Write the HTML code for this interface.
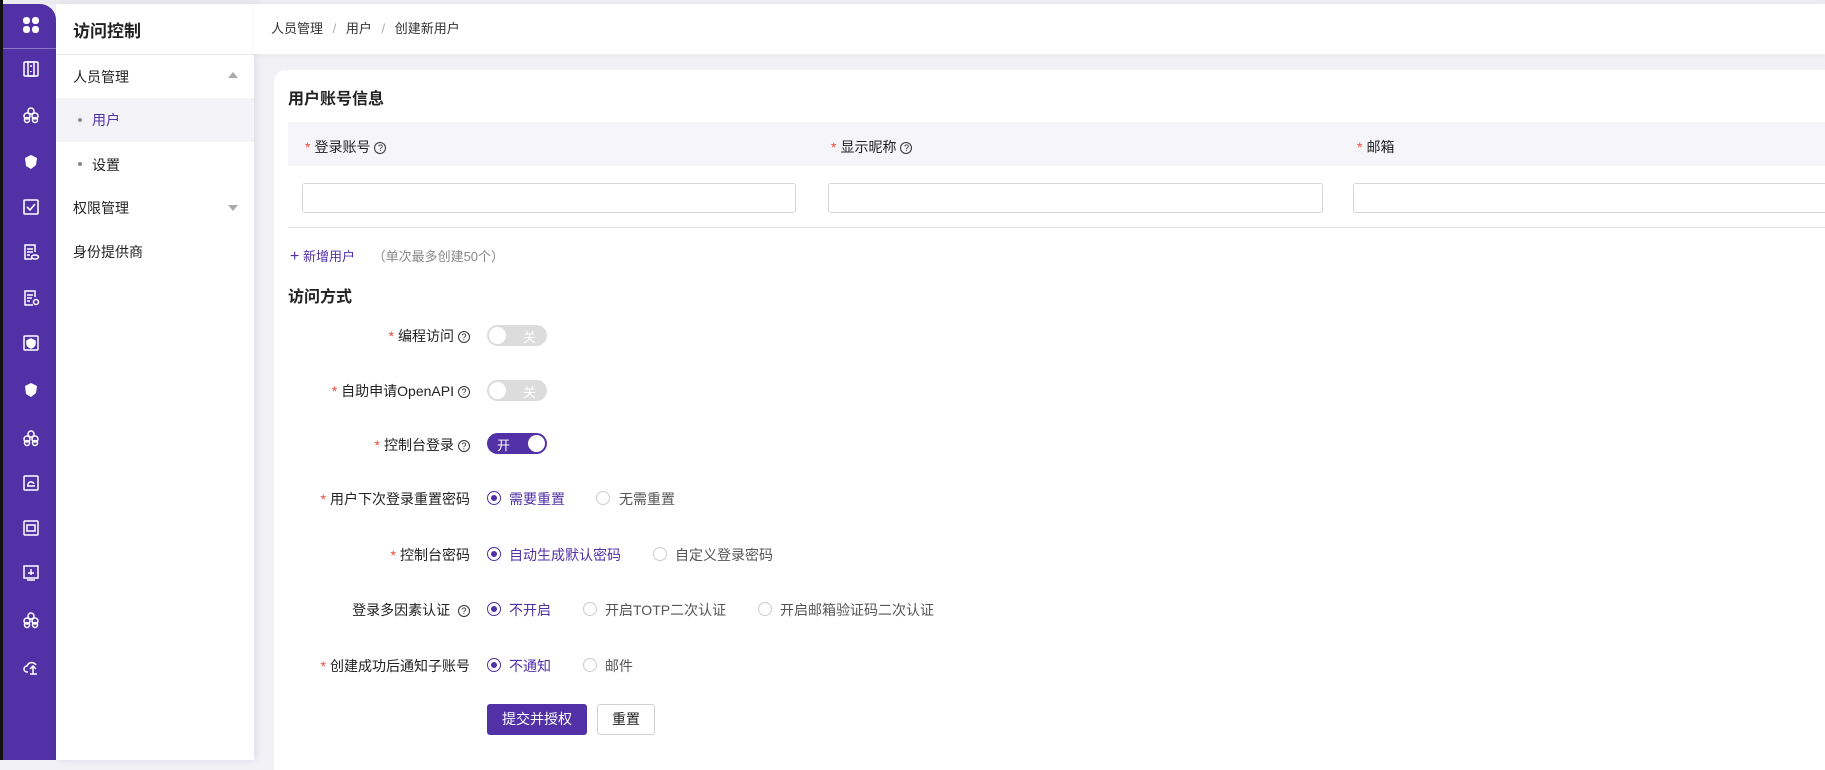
<!DOCTYPE html>
<html><head><meta charset="utf-8">
<style>
*{box-sizing:border-box;margin:0;padding:0}
body{width:1825px;height:760px;overflow:hidden;background:#f2f2f6;font-family:"Liberation Sans","Noto Sans CJK SC",sans-serif;color:#222;position:relative;font-size:14px}
.abs{position:absolute}
#strip{left:0;top:0;width:1825px;height:4px;background:#ececf0}
#black{left:0;top:0;width:3px;height:760px;background:#111}
#side{left:3px;top:4px;width:53px;height:756px;background:#5230a5;border-top-right-radius:16px}
#side .div{position:absolute;left:0;top:44px;width:53px;height:1px;background:#8a74c4}
.ic{position:absolute;left:19px;width:18px;height:18px}
#menu{left:56px;top:4px;width:198px;height:756px;background:#fff;box-shadow:2px 0 8px rgba(80,60,140,.12)}
#menu .t{position:absolute;left:17px;top:13px;font-size:17px;font-weight:bold}
#menu .hl{position:absolute;left:0;top:50px;width:198px;height:1px;background:#e6e6ec}
.mi{position:absolute;left:17px;font-size:14px}
.dot{position:absolute;left:22px;width:4px;height:4px;border-radius:2px;background:#888}
#hdr{left:254px;top:4px;width:1571px;height:50px;background:#fff;box-shadow:0 2px 6px rgba(0,0,0,.04)}
#card{left:274px;top:70px;width:1560px;height:700px;background:#fff;border-top-left-radius:12px}
.h{position:absolute;font-size:16px;font-weight:bold}
.req{color:#f04a3a;margin-right:4px}
.q{display:inline-block;width:12px;height:12px;border:1px solid #333;border-radius:50%;font-size:9px;line-height:10px;text-align:center;vertical-align:1px;margin-left:4px}
.inp{position:absolute;top:183px;height:30px;border:1px solid #d6d6da;border-radius:3px;background:#fff}
.lbl{position:absolute;right:1355px;font-size:14px;white-space:nowrap;text-align:right}
.tg{position:absolute;left:487px;width:60px;height:21px;border-radius:11px;background:#dcdcdc;color:#fff;font-size:13px}
.tg .k{position:absolute;top:2px;width:17px;height:17px;border-radius:50%;background:#fff}
.rd{position:absolute;width:14px;height:14px;border:1px solid #ccc;border-radius:50%}
.rd.on{border-color:#5230a5}
.rd.on:after{content:"";position:absolute;left:3px;top:3px;width:6px;height:6px;border-radius:50%;background:#5230a5}
.rt{position:absolute;font-size:14px;color:#555}
.rt.on{color:#5230a5}
</style></head><body>
<div id="strip" class="abs"></div>
<div id="black" class="abs"></div>
<div id="side" class="abs">
 <svg class="ic" style="top:12px" viewBox="0 0 18 18" fill="#fff"><rect x="1" y="1" width="7" height="7" rx="3"/><rect x="10" y="1" width="7" height="7" rx="3"/><rect x="1" y="10" width="7" height="7" rx="3"/><rect x="10" y="10" width="7" height="7" rx="3"/></svg>
 <div class="div"></div>
 <svg class="ic" style="top:56px" viewBox="0 0 18 18" fill="none" stroke="#fff" stroke-width="1.5"><rect x="2" y="2" width="14" height="14" rx="1"/><rect x="6" y="2" width="6" height="14"/><path d="M8 6h2M9 11v1"/></svg>
 <svg class="ic" style="top:102px" viewBox="0 0 18 18" fill="none" stroke="#fff" stroke-width="1.5"><circle cx="9" cy="5" r="3"/><circle cx="5" cy="10" r="3"/><circle cx="13" cy="10" r="3"/><circle cx="5" cy="14" r="2.5"/><circle cx="13" cy="14" r="2.5"/></svg>
 <svg class="ic" style="top:149px" viewBox="0 0 18 18" fill="#fff"><path d="M3 5l6-3 6 3-1 7-5 4-5-3z"/></svg>
 <svg class="ic" style="top:194px" viewBox="0 0 18 18" fill="none" stroke="#fff" stroke-width="1.6"><rect x="2" y="2" width="14" height="14" rx="1"/><path d="M5 9l3 3 5-6"/></svg>
 <svg class="ic" style="top:239px" viewBox="0 0 18 18" fill="none" stroke="#fff" stroke-width="1.5"><path d="M13 9V2H3v14h7"/><path d="M5 6h6M5 9h6M5 12h3"/><ellipse cx="13" cy="14" rx="3.5" ry="2"/></svg>
 <svg class="ic" style="top:285px" viewBox="0 0 18 18" fill="none" stroke="#fff" stroke-width="1.5"><path d="M13 8V2H3v14h8"/><path d="M5 6h6M5 9h5M5 12h3"/><circle cx="14" cy="13" r="2.5"/></svg>
 <svg class="ic" style="top:330px" viewBox="0 0 18 18" fill="none" stroke="#fff" stroke-width="1.5"><rect x="2" y="2" width="14" height="14" rx="1"/><path d="M9 5l4 2v3c0 2-2 3-4 4-2-1-4-2-4-4V7z" fill="#fff"/></svg>
 <svg class="ic" style="top:377px" viewBox="0 0 18 18" fill="#fff"><path d="M3 5l6-3 6 3-1 7-5 4-5-3z"/></svg>
 <svg class="ic" style="top:425px" viewBox="0 0 18 18" fill="none" stroke="#fff" stroke-width="1.5"><circle cx="9" cy="5" r="3"/><circle cx="5" cy="10" r="3"/><circle cx="13" cy="10" r="3"/><circle cx="5" cy="14" r="2.5"/><circle cx="13" cy="14" r="2.5"/></svg>
 <svg class="ic" style="top:470px" viewBox="0 0 18 18" fill="none" stroke="#fff" stroke-width="1.5"><rect x="2" y="2" width="14" height="14" rx="1"/><path d="M5 12h8M6 12a3 3 0 016-2"/></svg>
 <svg class="ic" style="top:515px" viewBox="0 0 18 18" fill="none" stroke="#fff" stroke-width="1.5"><rect x="2" y="2" width="14" height="14" rx="1"/><path d="M5 6h8v6H5z"/></svg>
 <svg class="ic" style="top:560px" viewBox="0 0 18 18" fill="none" stroke="#fff" stroke-width="1.5"><rect x="2" y="2" width="14" height="12"/><path d="M5 16h8M9 5v6M6 9h6"/></svg>
 <svg class="ic" style="top:607px" viewBox="0 0 18 18" fill="none" stroke="#fff" stroke-width="1.5"><circle cx="9" cy="5" r="3"/><circle cx="5" cy="10" r="3"/><circle cx="13" cy="10" r="3"/><circle cx="5" cy="14" r="2.5"/><circle cx="13" cy="14" r="2.5"/></svg>
 <svg class="ic" style="top:654px" viewBox="0 0 18 18" fill="none" stroke="#fff" stroke-width="1.5"><path d="M6 14H5a3 3 0 010-6 5 5 0 019-1"/><path d="M11 16V9M8 11l3-3 3 3M8 16h7"/></svg>
</div>
<div id="menu" class="abs">
 <div class="t">访问控制</div>
 <div class="hl"></div>
 <div class="mi" style="top:63px">人员管理</div>
 <div class="abs" style="left:172px;top:68px;width:0;height:0;border:5px solid transparent;border-bottom:6px solid #aaa;border-top:0"></div>
 <div class="abs" style="left:0;top:94px;width:198px;height:44px;background:#f3f3f8"></div>
 <div class="dot" style="top:114px"></div>
 <div class="mi" style="left:36px;top:106px;color:#5230a5">用户</div>
 <div class="dot" style="top:158px"></div>
 <div class="mi" style="left:36px;top:151px">设置</div>
 <div class="mi" style="top:194px">权限管理</div>
 <div class="abs" style="left:172px;top:201px;width:0;height:0;border:5px solid transparent;border-top:6px solid #aaa;border-bottom:0"></div>
 <div class="mi" style="top:238px">身份提供商</div>
</div>
<div id="hdr" class="abs"><div style="position:absolute;left:17px;top:14px;font-size:13px;color:#333">人员管理 <span style="color:#aaa;margin:0 6px">/</span> 用户 <span style="color:#aaa;margin:0 6px">/</span> 创建新用户</div></div>
<div id="card" class="abs"></div>
<div class="h" style="left:288px;top:85px">用户账号信息</div>
<div class="abs" style="left:288px;top:122px;width:1537px;height:44px;background:#f5f5fa"></div>
<div class="abs" style="left:305px;top:137px;font-size:14px"><span class="req">*</span>登录账号<span class="q">?</span></div>
<div class="abs" style="left:831px;top:137px;font-size:14px"><span class="req">*</span>显示昵称<span class="q">?</span></div>
<div class="abs" style="left:1357px;top:137px;font-size:14px"><span class="req">*</span>邮箱</div>
<div class="inp" style="left:302px;width:494px"></div>
<div class="inp" style="left:828px;width:495px"></div>
<div class="inp" style="left:1353px;width:500px"></div>
<div class="abs" style="left:288px;top:227px;width:1537px;height:1px;background:#e3e3e8"></div>
<div class="abs" style="left:290px;top:246px;font-size:13px;color:#5230a5"><span style="font-size:16px">+</span> 新增用户 <span style="color:#888;margin-left:14px">（单次最多创建50个）</span></div>
<div class="h" style="left:288px;top:283px">访问方式</div>

<div class="lbl" style="top:326px"><span class="req">*</span>编程访问<span class="q">?</span></div>
<div class="tg" style="top:325px"><div class="k" style="left:2px"></div><span style="position:absolute;left:36px;top:2px">关</span></div>
<div class="lbl" style="top:381px"><span class="req">*</span>自助申请OpenAPI<span class="q">?</span></div>
<div class="tg" style="top:380px"><div class="k" style="left:2px"></div><span style="position:absolute;left:36px;top:2px">关</span></div>
<div class="lbl" style="top:435px"><span class="req">*</span>控制台登录<span class="q">?</span></div>
<div class="tg" style="top:433px;background:#5230a5"><span style="position:absolute;left:10px;top:2px">开</span><div class="k" style="left:41px"></div></div>

<div class="lbl" style="top:489px;right:1355px"><span class="req">*</span>用户下次登录重置密码</div>
<div class="rd on" style="left:487px;top:491px"></div><div class="rt on" style="left:509px;top:489px">需要重置</div>
<div class="rd" style="left:596px;top:491px"></div><div class="rt" style="left:619px;top:489px">无需重置</div>

<div class="lbl" style="top:545px"><span class="req">*</span>控制台密码</div>
<div class="rd on" style="left:487px;top:547px"></div><div class="rt on" style="left:509px;top:545px">自动生成默认密码</div>
<div class="rd" style="left:653px;top:547px"></div><div class="rt" style="left:675px;top:545px">自定义登录密码</div>

<div class="lbl" style="top:600px">登录多因素认证 <span class="q">?</span></div>
<div class="rd on" style="left:487px;top:602px"></div><div class="rt on" style="left:509px;top:600px">不开启</div>
<div class="rd" style="left:583px;top:602px"></div><div class="rt" style="left:605px;top:600px">开启TOTP二次认证</div>
<div class="rd" style="left:758px;top:602px"></div><div class="rt" style="left:780px;top:600px">开启邮箱验证码二次认证</div>

<div class="lbl" style="top:656px"><span class="req">*</span>创建成功后通知子账号</div>
<div class="rd on" style="left:487px;top:658px"></div><div class="rt on" style="left:509px;top:656px">不通知</div>
<div class="rd" style="left:583px;top:658px"></div><div class="rt" style="left:605px;top:656px">邮件</div>

<div class="abs" style="left:487px;top:704px;width:100px;height:31px;background:#5230a5;border-radius:3px;color:#fff;font-size:14px;text-align:center;line-height:31px">提交并授权</div>
<div class="abs" style="left:597px;top:704px;width:58px;height:31px;border:1px solid #d0d0d6;border-radius:3px;font-size:14px;text-align:center;line-height:29px;background:#fff">重置</div>
</body></html>
